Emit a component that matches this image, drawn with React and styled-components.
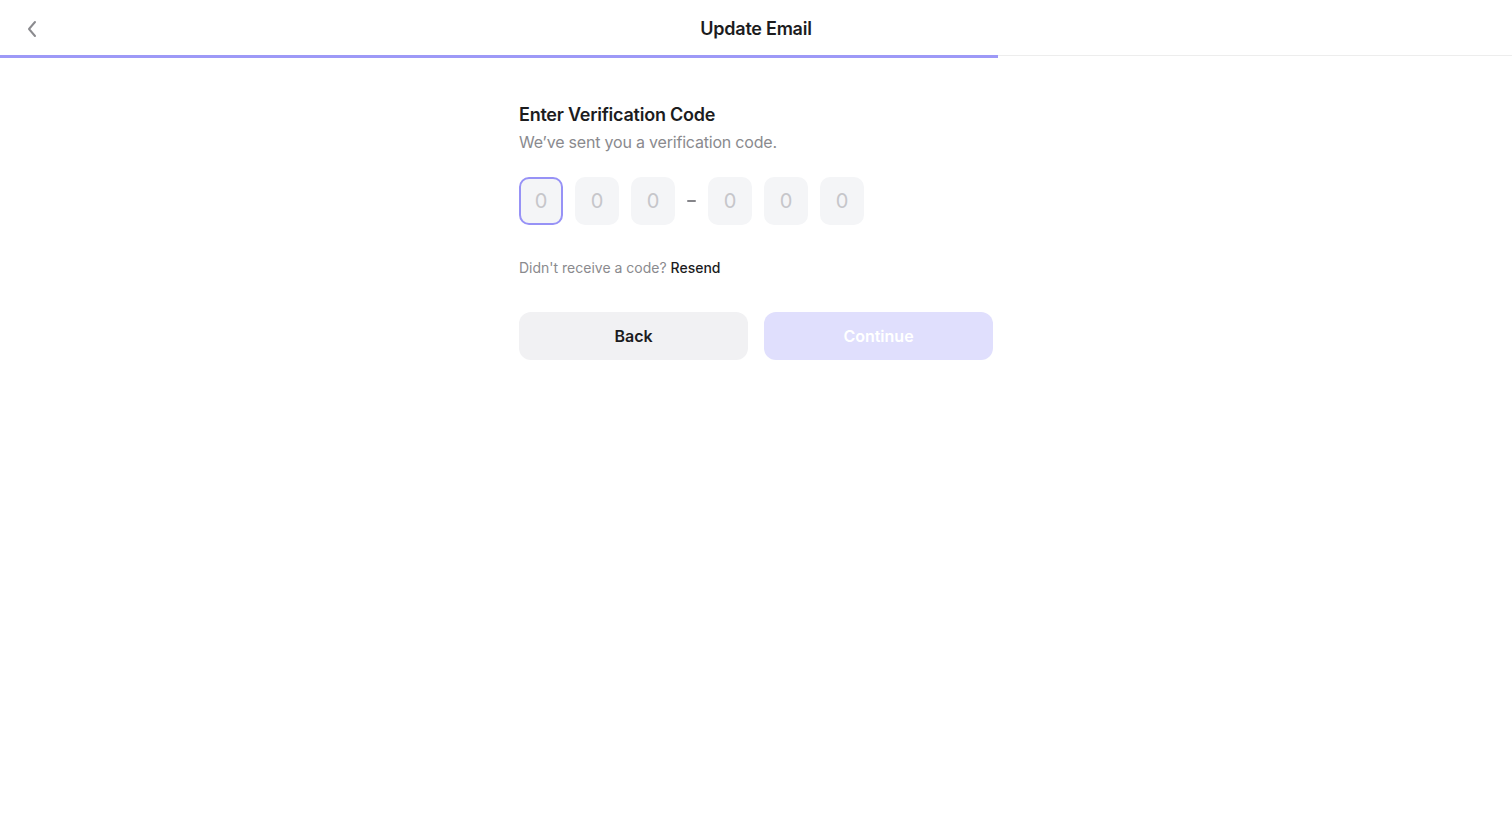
import React from "react";
import styled, { createGlobalStyle } from "styled-components";

const Global = createGlobalStyle`
  html, body { margin: 0; padding: 0; background: #ffffff; }
  body { font-family: Inter, "Noto Sans", sans-serif; color: #1c1c1e; -webkit-font-smoothing: antialiased; }
  * { box-sizing: border-box; }
`;

const Page = styled.div`
  min-height: 814px;
  display: flex;
  flex-direction: column;
`;

const Header = styled.header`
  height: 55px;
  padding-top: 2px;
  display: grid;
  grid-template-columns: 64px 1fr 64px;
  align-items: center;
`;

const IconButton = styled.button`
  border: none;
  background: none;
  padding: 0;
  margin-left: 20px;
  width: 24px;
  height: 28px;
  display: flex;
  align-items: center;
  justify-content: center;
  color: #8b8b8f;
  cursor: pointer;
`;

const HeaderTitle = styled.h1`
  margin: 0;
  text-align: center;
  font-size: 18px;
  font-weight: 600;
  color: #1c1c1e;
  letter-spacing: -0.25px;
`;

const ProgressTrack = styled.div`
  height: 3px;
  background: linear-gradient(#ededed 0 1px, transparent 1px);
`;

const ProgressFill = styled.div`
  height: 3px;
  background: #9d99f7;
`;

const Main = styled.main`
  display: flex;
  justify-content: center;
  padding-top: 44px;
`;

const Column = styled.section`
  width: 474px;
  display: flex;
  flex-direction: column;
`;

const Title = styled.h2`
  margin: 0;
  font-size: 18px;
  line-height: 26px;
  font-weight: 600;
  letter-spacing: -0.24px;
  color: #1c1c1e;
`;

const Subtitle = styled.p`
  margin: 2px 0 0;
  font-size: 16px;
  line-height: 24px;
  letter-spacing: -0.2px;
  color: #8a8a8e;
`;

const CodeRow = styled.div`
  display: flex;
  align-items: center;
  gap: 12px;
  margin-top: 23px;
`;

const CodeBox = styled.div`
  width: 44px;
  height: 48px;
  border-radius: 10px;
  background: #f4f5f7;
  border: 2px solid ${(p) => (p.$active ? "#9792f6" : "transparent")};
  display: flex;
  align-items: center;
  justify-content: center;
  font-size: 20px;
  color: #c6c6ca;
`;

const Dash = styled.span`
  width: 9px;
  height: 2px;
  margin-bottom: 1px;
  border-radius: 1px;
  background: #85858a;
`;

const ResendLine = styled.p`
  margin: 33px 0 0;
  font-size: 14px;
  line-height: 20px;
  color: #8a8a8e;
`;

const ResendLink = styled.span`
  color: #1c1c1e;
  font-weight: 500;
  cursor: pointer;
`;

const Actions = styled.div`
  display: grid;
  grid-template-columns: 1fr 1fr;
  gap: 16px;
  margin-top: 34px;
`;

const ActionButton = styled.button`
  height: 48px;
  border: none;
  border-radius: 12px;
  font-family: inherit;
  font-size: 16px;
  font-weight: 600;
  background: ${(p) => (p.$primary ? "#e0dffd" : "#f1f1f3")};
  color: ${(p) => (p.$primary ? "#ffffff" : "#1c1c1e")};
  cursor: pointer;
`;

const digits = ["0", "0", "0", null, "0", "0", "0"];

export default function App() {
  return (
    <Page>
      <Global />
      <Header>
        <IconButton aria-label="Back">
          <svg width="14" height="18" viewBox="0 0 14 18" fill="none">
            <path d="M10 2 L4 9 L10 16" stroke="currentColor" strokeWidth="2" strokeLinecap="round" strokeLinejoin="round" />
          </svg>
        </IconButton>
        <HeaderTitle>Update Email</HeaderTitle>
        <div />
      </Header>
      <ProgressTrack>
        <ProgressFill style={{ width: `${(998 / 1512) * 100}%` }} />
      </ProgressTrack>
      <Main>
        <Column>
          <Title>Enter Verification Code</Title>
          <Subtitle>We’ve sent you a verification code.</Subtitle>
          <CodeRow>
            {digits.map((d, i) =>
              d === null ? (
                <Dash key={i} aria-hidden="true" />
              ) : (
                <CodeBox key={i} $active={i === 0}>{d}</CodeBox>
              )
            )}
          </CodeRow>
          <ResendLine>
            Didn't receive a code? <ResendLink>Resend</ResendLink>
          </ResendLine>
          <Actions>
            <ActionButton>Back</ActionButton>
            <ActionButton $primary>Continue</ActionButton>
          </Actions>
        </Column>
      </Main>
    </Page>
  );
}
